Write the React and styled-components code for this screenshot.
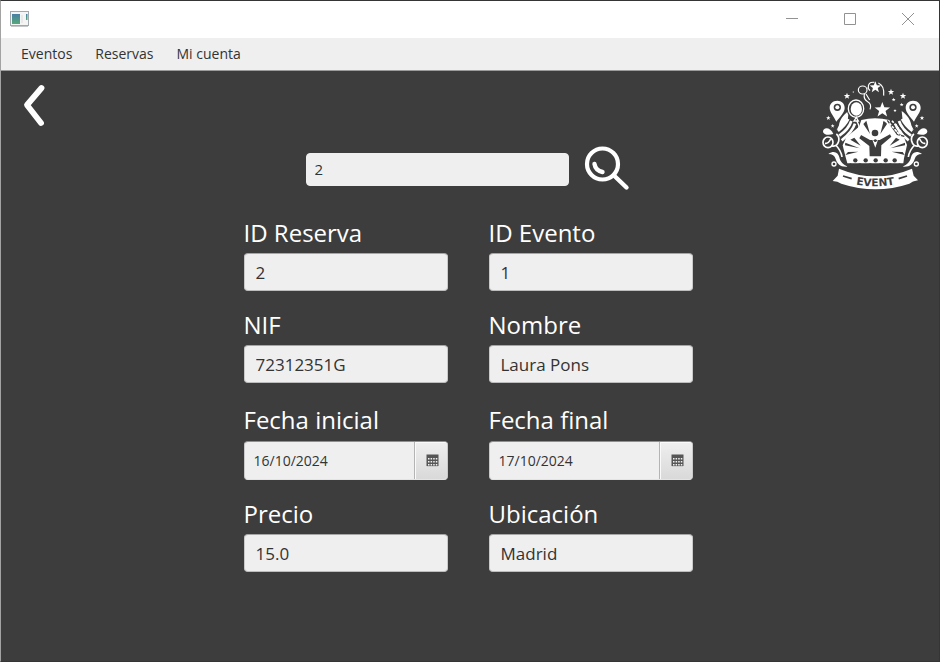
import React, { useState } from "react";
import styled, { createGlobalStyle } from "styled-components";

const GlobalStyle = createGlobalStyle`
  *, *::before, *::after { box-sizing: border-box; }
  body { margin: 0; background: #3d3d3d; }
  body, button, input { font-family: "Open Sans", "Noto Sans", sans-serif; }
`;

const Window = styled.div`
  display: flex;
  flex-direction: column;
  min-height: 100vh;
  background: #3d3d3d;
  border: 1px solid #353535;
  border-left-color: #a3a3a3;
`;

const TitleBar = styled.header`
  display: flex;
  align-items: center;
  justify-content: space-between;
  height: 37px;
  padding: 0 2px 2px 9px;
  background: #ffffff;
`;

const WindowControls = styled.div`
  display: flex;
`;

const WindowButton = styled.button`
  display: grid;
  place-items: center;
  width: 58px;
  height: 34px;
  padding: 0;
  border: 0;
  background: none;
  color: #929292;
`;

const MenuBar = styled.nav`
  display: flex;
  align-items: center;
  gap: 23px;
  height: 33px;
  padding: 0 20px;
  background: #efefef;
  border-bottom: 1px solid #9c9c9c;
`;

const MenuButton = styled.button`
  padding: 0;
  border: 0;
  background: none;
  color: #333333;
  font-size: 14px;
  line-height: 20px;
`;

const Content = styled.main`
  flex: 1;
  display: grid;
  grid-template-columns: 1fr auto 1fr;
  align-items: start;
`;

const IconButton = styled.button`
  display: block;
  padding: 0;
  border: 0;
  background: none;
  color: #ffffff;
  cursor: pointer;

  svg { display: block; }
`;

const BackButton = styled(IconButton)`
  justify-self: start;
  margin: 12px 0 0 19px;
`;

const Brand = styled.div`
  justify-self: end;
  margin: 9px 10px 0 0;

  svg { display: block; }
`;

const Booking = styled.div`
  padding: 75px 4px 24px 0;
`;

const SearchForm = styled.form`
  display: flex;
  align-items: center;
  gap: 15px;
  margin-bottom: 23px;
  padding-left: 62px;
`;

const TextBox = styled.input`
  width: 100%;
  height: ${(p) => (p.$compact ? 33 : 38)}px;
  padding: 0 ${(p) => (p.$compact ? 8 : 11)}px;
  border: 1px solid;
  border-color: #a6a6a6 #c9c9c9 #bdbdbd;
  border-radius: 4px;
  background: #efefef;
  color: #333333;
  font-size: ${(p) => (p.$compact ? 15 : 17)}px;
  outline: 0;
`;

const SearchBox = styled(TextBox)`
  width: 263px;
  border-color: #efefef;
`;

const Fields = styled.div`
  display: grid;
  grid-template-columns: 204px 204px;
  gap: 16px 41px;
`;

const FieldLabel = styled.label`
  display: block;
  height: ${(p) => (p.$tall ? 42 : 38)}px;
  color: #ffffff;
  font-size: 24px;
  line-height: ${(p) => (p.$tall ? 42 : 36)}px;
`;

const DateBox = styled.div`
  display: flex;
  height: 39px;
  border: 1px solid;
  border-color: #8f8f8f #c9c9c9 #e4e4e4;
  border-radius: 4px;
  background: #efefef;
  overflow: hidden;
`;

const DateInput = styled.input`
  flex: 1;
  min-width: 0;
  padding: 0 9px;
  border: 0;
  background: none;
  color: #333333;
  font-size: 14px;
  outline: 0;
`;

const CalendarButton = styled.button`
  display: grid;
  place-items: center;
  width: 33px;
  padding: 0 0 0 3px;
  border: 0;
  border-left: 1px solid #b4b4b4;
  background: linear-gradient(#efefef, #d9d9d9);
  box-shadow: inset 1px 1px 0 #fafafa;
`;

const AppIcon = () => (
  <svg width="19" height="16" viewBox="0 0 19 16" aria-hidden="true">
    <defs>
      <linearGradient id="screen" x1="0" y1="0" x2="0" y2="1">
        <stop offset="0" stopColor="#4a7fa3" />
        <stop offset="1" stopColor="#55a878" />
      </linearGradient>
    </defs>
    <rect x="0.5" y="0.5" width="18" height="14" fill="#f4f4f4" stroke="#a2a9ae" />
    <path d="M1 15.5H18" stroke="#c4c8cb" />
    <rect x="2" y="3" width="8" height="10" fill="url(#screen)" />
    <path d="M12 4V12" stroke="#e8e8e8" strokeWidth="2" />
    <rect x="16" y="3" width="1.5" height="6" fill="url(#screen)" />
  </svg>
);

const ControlIcon = ({ d }) => (
  <svg width="12" height="12" viewBox="0 0 12 12" fill="none" stroke="currentColor" aria-hidden="true">
    <path d={d} />
  </svg>
);

const BackIcon = () => (
  <svg width="28" height="46" viewBox="0 0 28 46" fill="none" stroke="currentColor" strokeWidth="5.8" strokeLinecap="round" strokeLinejoin="round" aria-hidden="true">
    <path d="M21.5 5 7 22 21 40" />
  </svg>
);

const SearchIcon = () => (
  <svg width="46" height="46" viewBox="0 0 46 46" fill="none" stroke="currentColor" strokeLinecap="round" aria-hidden="true">
    <circle cx="18.5" cy="18" r="15.5" strokeWidth="4.2" />
    <path d="M30.5 30 42.5 41.5" strokeWidth="4.4" />
    <path d="M10.5 18Q11.5 24.5 18.5 26" strokeWidth="4.4" />
  </svg>
);

const CalendarIcon = () => (
  <svg width="13" height="13" viewBox="0 0 13 13" aria-hidden="true">
    <path d="M.5 .5H12.5V12.5H.5Z" fill="#555" />
    <path d="M0 13H13" stroke="#fff" />
    {[4, 7, 10].map((y) =>
      [2, 4.6, 7.2, 9.8].map((x) => (
        <rect key={`${x}-${y}`} x={x} y={y} width="1.5" height="1.5" fill="#f1f1f1" />
      ))
    )}
  </svg>
);

const STAR = "M0-10 2.5-3.3 9.6-3.1 4 1.3 6 8.2 0 4.2-6 8.2-4 1.3-9.6-3.1-2.5-3.3Z";

const STARS = [
  [96, 63, 1], [228, 51, 1], [264, 63, 1], [236, 74, 0.6], [260, 89, 0.6],
  [240, 107, 0.5], [40, 129, 0.7], [53, 153, 0.6], [321, 129, 0.7],
  [305, 153, 0.6], [202, 105, 2.4], [181, 37, 1.8], [115, 51, 0.3],
];

const Flank = () => (
  <>
    <path fillRule="evenodd" fill="#fff" d="M67 77C52 77 44 87 44 99C44 111 56 124 64 140C76 124 89 112 89 99C89 86 80 77 67 77ZM67 86A11 11 0 1 1 67 108A11 11 0 1 1 67 86Z" />
    <circle cx="67" cy="97" r="6" fill="#fff" />
    <path fill="#fff" d="M101 108C84 119 73 137 72 151L65 165C78 162 91 151 98 138Z" />
    <path d="M100 132Q90 152 69 168M109 138Q101 163 73 182M120 146Q112 171 80 196" fill="none" stroke="#fff" strokeWidth="8" />
    <path fill="#fff" d="M24 170C24 155 47 155 55 177C40 182 25 179 24 170Z" />
    <ellipse cx="39" cy="202" rx="15" ry="16" fill="none" stroke="#fff" strokeWidth="5" />
    <path d="M30 205Q40 207 47 192M51 213Q66 216 71 199Q74 184 64 177M62 210Q78 226 81 246" fill="none" stroke="#fff" strokeWidth="5" />
    <path fill="#fff" d="M40 237C58 225 70 234 73 247C76 261 85 269 98 275C76 277 66 266 62 252C59 242 52 237 40 237Z" />
    <circle cx="57" cy="267" r="6" fill="none" stroke="#fff" strokeWidth="4" />
  </>
);

const EventLogo = () => (
  <svg width="108" height="110" viewBox="18 15 324 330" role="img" aria-label="Event">
    <Flank />
    <g transform="translate(361 0) scale(-1 1)"><Flank /></g>

    <path fill="#fff" d="M94 187 132 155 139 135Q180 125 223 135L230 155 267 187 276 210 267 250 265 265 97 265 92 247 83 211Z" />
    <path fill="#3d3d3d" d="M145 147 165 177 154 137ZM216 147 196 177 206 137ZM91 203 134 220 90 211ZM91 240 130 230 99 231ZM270 203 226 220 270 211ZM269 240 230 230 263 231ZM106 194 137 212 118 188ZM254 194 224 212 243 188Z" />
    <path fill="#3d3d3d" d="M138 180 165 195 194 195 225 178 229 185 199 211 198 244 164 244 163 213 133 190Z" />
    <circle cx="180" cy="174" r="10" fill="#3d3d3d" />
    <path fill="#fff" d="M172 194 181 218 189 194 181 200Z" />
    <circle cx="181" cy="197" r="4" fill="#3d3d3d" />
    <path fill="#3d3d3d" d="M97 272 106 265 119 271 135 265 150 271 166 265 181 271 197 265 211 271 226 265 240 271 255 265 266 278 97 278Z" />
    {[121, 152, 182, 212, 239].map((x) => (
      <circle key={x} cx={x} cy="256" r="6.5" fill="#3d3d3d" />
    ))}

    <g fill="none" stroke="#fff" strokeWidth="3.5">
      <ellipse cx="143" cy="45" rx="13" ry="12" />
      <path d="M148 57Q145 73 158 80T165 103M160 39Q158 20 178 22M190 24Q209 32 206 62" />
      <path d="M158 38 165 47M153 57 164 75" />
    </g>
    <ellipse cx="123" cy="101" rx="28" ry="31" fill="#3d3d3d" />
    <ellipse cx="123" cy="101" rx="23" ry="26" fill="none" stroke="#fff" strokeWidth="4" />
    <ellipse cx="124" cy="102" rx="17" ry="20" fill="#fff" />
    <path d="M124 127 117 138H130ZM124 137Q137 154 128 165T136 182" fill="none" stroke="#fff" strokeWidth="4" />
    <path d="M217 136 247 178 268 184M237 133 270 178M205 142 214 146" fill="none" stroke="#3d3d3d" strokeWidth="4" />
    <path d="M223 145 257 183M231 137 263 176" fill="none" stroke="#fff" strokeWidth="5" strokeDasharray="8 4" />
    <path d={STAR} transform="translate(202 105) scale(3)" fill="#3d3d3d" />
    {STARS.map(([x, y, s]) => (
      <path key={`${x}-${y}`} d={STAR} transform={`translate(${x} ${y}) scale(${s})`} fill="#fff" />
    ))}

    <path fill="#fff" d="M72 281Q182 327 291 281L296 302 309 316Q292 318 283 326Q182 360 79 326Q68 319 53 318L68 302Z" />
    <path d="M84 303 110 311M251 311 276 303" stroke="#3d3d3d" strokeWidth="5" />
    <path id="ribbon" d="M116 327Q181 341 246 327" fill="none" />
    <text fontFamily="DejaVu Sans, sans-serif" fontSize="32" fontWeight="700" fill="#3d3d3d" textAnchor="middle">
      <textPath href="#ribbon" startOffset="50%">EVENT</textPath>
    </text>
  </svg>
);

const FIELDS = [
  { id: "reserva", label: "ID Reserva", value: "2" },
  { id: "evento", label: "ID Evento", value: "1" },
  { id: "nif", label: "NIF", value: "72312351G" },
  { id: "nombre", label: "Nombre", value: "Laura Pons" },
  { id: "inicio", label: "Fecha inicial", value: "16/10/2024", date: true },
  { id: "fin", label: "Fecha final", value: "17/10/2024", date: true },
  { id: "precio", label: "Precio", value: "15.0" },
  { id: "ubicacion", label: "Ubicación", value: "Madrid" },
];

const Field = ({ id, label, value, date }) => (
  <div>
    <FieldLabel htmlFor={id} $tall={date}>{label}</FieldLabel>
    {date ? (
      <DateBox>
        <DateInput id={id} type="text" defaultValue={value} />
        <CalendarButton type="button" aria-label={`Abrir calendario: ${label}`}>
          <CalendarIcon />
        </CalendarButton>
      </DateBox>
    ) : (
      <TextBox id={id} type="text" defaultValue={value} />
    )}
  </div>
);

export default function App() {
  const [query, setQuery] = useState("2");

  return (
    <>
      <GlobalStyle />
      <Window>
        <TitleBar>
          <AppIcon />
          <WindowControls>
            <WindowButton aria-label="Minimizar"><ControlIcon d="M0 5.5H12" /></WindowButton>
            <WindowButton aria-label="Maximizar"><ControlIcon d="M.5 .5H11.5V11.5H.5Z" /></WindowButton>
            <WindowButton aria-label="Cerrar"><ControlIcon d="M0 0 12 12M12 0 0 12" /></WindowButton>
          </WindowControls>
        </TitleBar>
        <MenuBar>
          <MenuButton>Eventos</MenuButton>
          <MenuButton>Reservas</MenuButton>
          <MenuButton>Mi cuenta</MenuButton>
        </MenuBar>
        <Content>
          <BackButton type="button" aria-label="Volver"><BackIcon /></BackButton>
          <Booking>
            <SearchForm onSubmit={(e) => e.preventDefault()}>
              <SearchBox
                $compact
                type="text"
                aria-label="Buscar reserva"
                value={query}
                onChange={(e) => setQuery(e.target.value)}
              />
              <IconButton type="submit" aria-label="Buscar"><SearchIcon /></IconButton>
            </SearchForm>
            <Fields>
              {FIELDS.map((field) => <Field key={field.id} {...field} />)}
            </Fields>
          </Booking>
          <Brand><EventLogo /></Brand>
        </Content>
      </Window>
    </>
  );
}
